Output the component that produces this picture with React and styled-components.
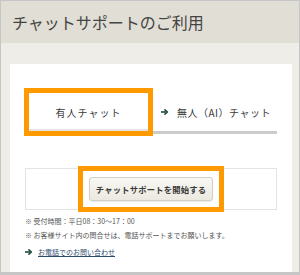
import React from "react";
import styled, { createGlobalStyle } from "styled-components";

const Global = createGlobalStyle`
  html, body { margin: 0; padding: 0; background: #fff; }
  body { font-family: "Noto Sans CJK JP", "Noto Sans", sans-serif; }
`;

const Frame = styled.div`
  width: 300px;
  height: 275px;
  box-sizing: border-box;
  border: 1px solid #c6c6c6;
  border-bottom-width: 3px;
  background: #efede7;
  display: flex;
  flex-direction: column;
  overflow: hidden;
`;

const Header = styled.header`
  height: 42px;
  flex: none;
  background: #e1ded5;
  display: flex;
  align-items: center;
  padding-left: 11px;
  padding-bottom: 1px;
  box-sizing: border-box;
`;

const Title = styled.h1`
  margin: 0;
  font-family: "Noto Sans CJK JP", serif;
  font-weight: 400;
  font-size: 16px;
  color: #444;
  letter-spacing: 0;
`;

const Body = styled.main`
  flex: 1;
  padding: 21px 7px 0 9px;
  display: flex;
`;

const Card = styled.section`
  flex: 1;
  background: #fff;
  padding: 29px 15px 0 15px;
`;

const Tabs = styled.div`
  display: flex;
  align-items: flex-start;
  margin-left: 4px;
`;

const Tab = styled.div`
  position: relative;
  z-index: ${(p) => (p.$active ? 1 : 0)};
  box-sizing: border-box;
  height: ${(p) => (p.$active ? "38px" : "41px")};
  width: ${(p) => (p.$active ? "119px" : "auto")};
  flex: ${(p) => (p.$active ? "none" : "1")};
  display: flex;
  align-items: center;
  justify-content: ${(p) => (p.$active ? "center" : "flex-start")};
  gap: 9px;
  padding: ${(p) => (p.$active ? "3px 0 0 0" : "0 0 0 13px")};
  border-bottom: ${(p) => (p.$active ? "2px solid #e3e3e3" : "3px solid #cbcbcb")};
  background: #fff;
  font-size: 10px;
  letter-spacing: ${(p) => (p.$active ? "1px" : "0.5px")};
  color: #3a3a3a;
  outline: ${(p) => (p.$active ? "5px solid #ff9900" : "none")};
  white-space: nowrap;
`;

const Arrow = () => (
  <svg width="7" height="6" viewBox="0 0 7 6" style={{ flex: "none" }}>
    <path d="M0 3 H5" stroke="#1f4c3f" strokeWidth="1.6" />
    <path d="M3.4 0.4 L6.4 3 L3.4 5.6" fill="none" stroke="#1f4c3f" strokeWidth="1.6" />
  </svg>
);

const StartBox = styled.div`
  margin-top: 34px;
  height: 42px;
  box-sizing: border-box;
  border: 1px solid #e3e3e3;
  display: flex;
  align-items: center;
  justify-content: center;
`;

const StartButton = styled.button`
  position: relative;
  width: 124px;
  height: 24px;
  box-sizing: border-box;
  border: 1px solid #d2cfc5;
  border-radius: 3px;
  background: linear-gradient(#f8f7f2, #ebe9e0);
  box-shadow: 0 1px 1px rgba(0, 0, 0, 0.08);
  font-family: "Noto Sans CJK JP", sans-serif;
  font-size: 8.3px;
  font-weight: 700;
  letter-spacing: 0.2px;
  color: #3a3a3a;
  padding: 0;

  &::after {
    content: "";
    position: absolute;
    inset: -12px;
    border: 5px solid #ff9900;
    pointer-events: none;
  }
`;

const Notes = styled.div`
  margin-top: 4px;
  display: flex;
  flex-direction: column;
`;

const Note = styled.p`
  margin: 0;
  font-size: 7px;
  line-height: 14.3px;
  color: #555;
  white-space: nowrap;
`;

const LinkRow = styled.div`
  margin-top: 2px;
  display: flex;
  align-items: center;
  gap: 6px;
  height: 14px;
`;

const PhoneLink = styled.a`
  font-size: 7px;
  color: #2d4c6c;
  text-decoration: underline;
  white-space: nowrap;
`;

export default function App() {
  return (
    <>
      <Global />
      <Frame>
        <Header>
          <Title>チャットサポートのご利用</Title>
        </Header>
        <Body>
          <Card>
            <Tabs>
              <Tab $active>有人チャット</Tab>
              <Tab>
                <Arrow />
                <span>無人（AI）チャット</span>
              </Tab>
            </Tabs>
            <StartBox>
              <StartButton>チャットサポートを開始する</StartButton>
            </StartBox>
            <Notes>
              <Note>※ 受付時間：平日08：30〜17：00</Note>
              <Note>※ お客様サイト内の問合せは、電話サポートまでお願いします。</Note>
            </Notes>
            <LinkRow>
              <Arrow />
              <PhoneLink href="#">お電話でのお問い合わせ</PhoneLink>
            </LinkRow>
          </Card>
        </Body>
      </Frame>
    </>
  );
}
